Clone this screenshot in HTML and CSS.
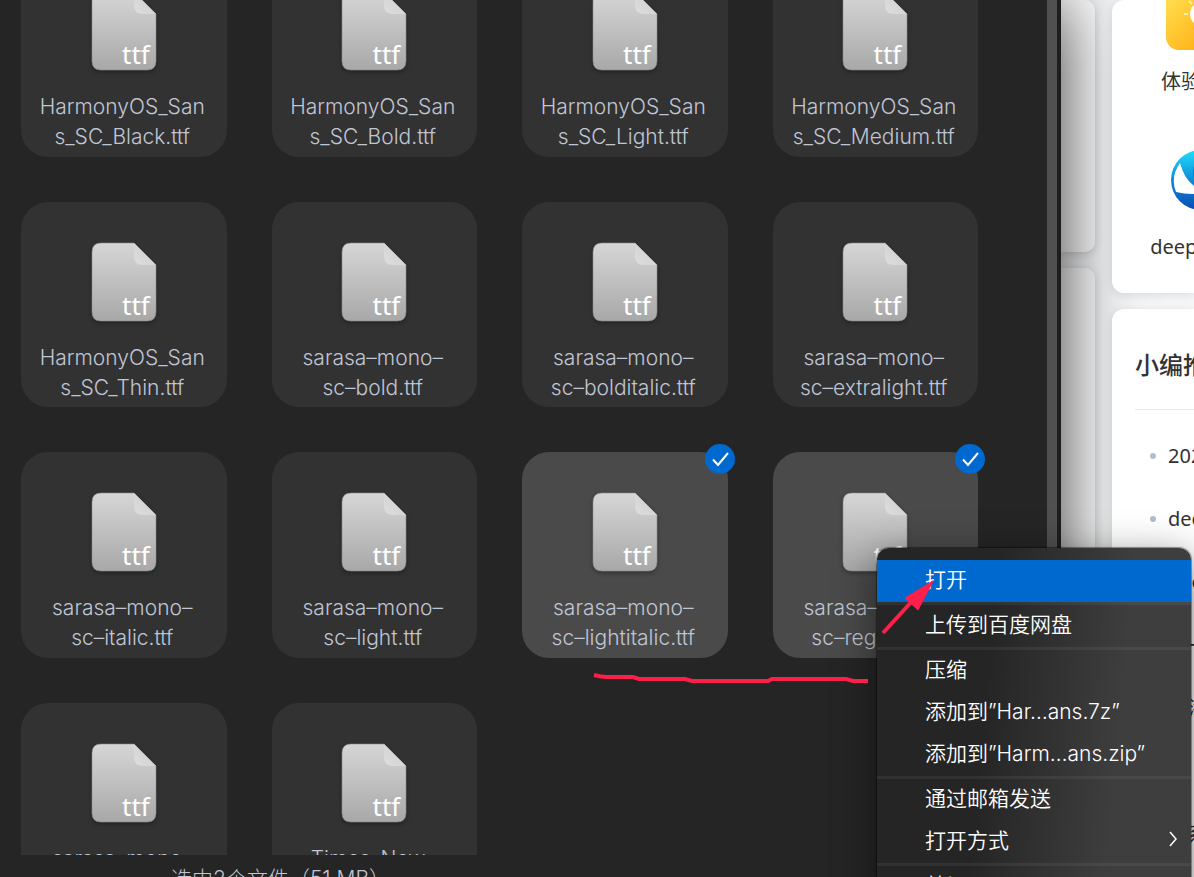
FILE: index.html
```
<!DOCTYPE html>
<html lang="zh-CN">
  <head>
    <meta charset="UTF-8" />
    <meta name="viewport" content="width=device-width, initial-scale=1.0" />
    <title>文件管理器</title>
    <link rel="stylesheet" href="styles.css">
  </head>
  <body>
    <!-- Shared icons -->
    <svg class="defs" width="0" height="0" aria-hidden="true">
      <defs>
        <linearGradient id="paper" x1="0" y1="0" x2="0" y2="1">
          <stop offset="0" stop-color="#d6d6d6" />
          <stop offset="1" stop-color="#a8a8a8" />
        </linearGradient>
        <linearGradient id="fold" x1="0" y1="1" x2="1" y2="0">
          <stop offset="0" stop-color="#dedede" />
          <stop offset="1" stop-color="#cccccc" />
        </linearGradient>
        <linearGradient id="deepin" x1="0" y1="0" x2="0" y2="1">
          <stop offset="0" stop-color="#22dcfa" />
          <stop offset="0.55" stop-color="#0a86d8" />
          <stop offset="1" stop-color="#0a4bb0" />
        </linearGradient>
        <symbol id="file" viewBox="0 0 66 80">
          <path d="M10 1H43L65 23V70Q65 79 56 79H10Q1 79 1 70V10Q1 1 10 1Z" fill="url(#paper)" stroke="#8f8f8f" stroke-width="0.6" />
          <path d="M43 1L65 23H52Q43 23 43 14Z" fill="url(#fold)" />
        </symbol>
        <symbol id="tick" viewBox="0 0 30 30">
          <circle cx="15" cy="15" r="15" fill="#0069cf" />
          <path d="M8 15.500L13 21L23 9" fill="none" stroke="#fff" stroke-width="2" />
        </symbol>
      </defs>
    </svg>

    <div class="desktop">
      <!-- File manager window -->
      <main class="window">
        <div class="scroller">
          <ul class="files" id="files"></ul>
        </div>
        <div class="status">选中2个文件（51 MB）</div>
      </main>

      <!-- Browser page behind the window -->
      <aside class="page">
        <div class="column">
          <div class="sheet"></div>
          <div class="sheet rest"></div>
        </div>
        <div class="column wide">
          <section class="panel apps">
            <a class="app" href="#">
              <span class="icon">
                <svg width="70" height="70" viewBox="0 0 70 70" aria-hidden="true">
                  <defs>
                    <linearGradient id="sunny" x1="0" y1="0" x2="1" y2="1">
                      <stop offset="0" stop-color="#ffe95a" />
                      <stop offset="0.7" stop-color="#ffb41c" />
                    </linearGradient>
                  </defs>
                  <rect width="70" height="70" rx="13" fill="url(#sunny)" />
                  <circle cx="36" cy="34" r="12" fill="#fff" />
                  <path d="M18 34H22M23 21L26 24" stroke="#fff" stroke-opacity="0.8" stroke-width="1.500" />
                </svg>
              </span>
              <span>体验中心</span>
            </a>
            <a class="app" href="#">
              <span class="icon">
                <svg width="60" height="60" viewBox="0 0 60 60" aria-hidden="true">
                  <circle cx="30" cy="30" r="30" fill="url(#deepin)" />
                  <path d="M9 13Q13 28 22 35Q28 40 36 42Q22 46 5 42Q-1 27 9 13Z" fill="#fff" />
                  <path d="M25 12Q18 24 26 33Q23 22 28 12Z" fill="#0a86d8" />
                </svg>
              </span>
              <span>deepinBBS</span>
            </a>
          </section>
          <section class="panel news">
            <h2>小编推荐</h2>
            <ul>
              <li><a href="#">2022</a></li>
              <li><a href="#">deepin</a></li>
              <li><a href="#">deepin</a></li>
              <li><a href="#">第一期</a></li>
              <li><a href="#">社添加</a></li>
              <li><a href="#">公</a></li>
              <li><a href="#">深系统</a></li>
            </ul>
          </section>
        </div>
      </aside>

      <!-- Context menu -->
      <div class="menu" role="menu">
        <button class="active" role="menuitem">打开</button>
        <hr />
        <button role="menuitem">上传到百度网盘</button>
        <hr />
        <button role="menuitem">压缩</button>
        <button role="menuitem">添加到”Har…ans.7z”</button>
        <button role="menuitem">添加到”Harm…ans.zip”</button>
        <hr />
        <button role="menuitem">通过邮箱发送</button>
        <button role="menuitem">打开方式
          <svg viewBox="0 0 8 16" aria-hidden="true"><path d="M1 1L7 8L1 15" fill="none" stroke="#fff" stroke-width="1.500" /></svg>
        </button>
        <hr />
        <button role="menuitem">剪切</button>
      </div>

      <!-- Red pen marks -->
      <svg class="underline" viewBox="0 0 276 12" aria-hidden="true">
        <path d="M1 4Q8 6 14 6H40L46 8H92L99 10H175L179 8H253L260 10H275" />
      </svg>
      <svg class="arrow" viewBox="0 0 54 56" aria-hidden="true">
        <path d="M3 54L34 20" />
        <polygon points="53,2 25,19 38,31" />
      </svg>
    </div>

    <script>
      // Each file name is split where the label wraps
      const files = [
        ["HarmonyOS_San", "s_SC_Black.ttf"],
        ["HarmonyOS_San", "s_SC_Bold.ttf"],
        ["HarmonyOS_San", "s_SC_Light.ttf"],
        ["HarmonyOS_San", "s_SC_Medium.ttf"],
        ["HarmonyOS_San", "s_SC_Thin.ttf"],
        ["sarasa–mono–", "sc–bold.ttf"],
        ["sarasa–mono–", "sc–bolditalic.ttf"],
        ["sarasa–mono–", "sc–extralight.ttf"],
        ["sarasa–mono–", "sc–italic.ttf"],
        ["sarasa–mono–", "sc–light.ttf"],
        ["sarasa–mono–", "sc–lightitalic.ttf", true],
        ["sarasa–mono–", "sc–regular.ttf", true],
        ["sarasa–mono–", "sc–semibold.ttf"],
        ["Times_New_", "Roman.ttf"],
      ];

      document.getElementById("files").innerHTML = files
        .map(
          ([first, second, selected]) => `
          <li class="file${selected ? " selected" : ""}">
            <div class="thumb">
              <svg viewBox="0 0 66 80"><use href="#file" /></svg>
              <span class="ext">ttf</span>
            </div>
            <div class="name">${first}<br />${second}</div>
            ${selected ? '<svg class="check" viewBox="0 0 30 30"><use href="#tick" /></svg>' : ""}
          </li>`
        )
        .join("");
    </script>
  </body>
</html>
```
FILE: styles.css
```
* {
  box-sizing: border-box;
}

body {
  margin: 0;
  font-family: Inter, "Noto Sans CJK SC", sans-serif;
  font-size: 21px;
  background: #f3f5f7;
}

ul {
  list-style: none;
  margin: 0;
  padding: 0;
}

a {
  color: inherit;
  text-decoration: none;
}

.defs {
  position: absolute;
}

.desktop {
  position: relative;
  display: flex;
  height: 100vh;
  overflow: hidden;
}

/* File manager */
.window {
  flex: 1;
  display: flex;
  flex-direction: column;
  background: #252525;
  border-right: 4px solid #1e1e1e;
  box-shadow: 0 0 70px rgba(0, 0, 0, 0.8);
  z-index: 1;
}

.scroller {
  flex: 1;
  min-height: 0;
  overflow: hidden;
  border-right: 10px solid #505050;
}

/* The list is scrolled, so the first row is cut at the top */
.files {
  display: grid;
  grid-template-columns: repeat(4, 1fr);
  gap: 45px;
  margin-top: -49px;
  padding: 0 69px 0 21px;
}

.file {
  position: relative;
  aspect-ratio: 1;
  padding-top: 40px;
  border-radius: 27px;
  background: #323232;
  text-align: center;
}

.file.selected {
  background: #4a4a4a;
}

.thumb {
  position: relative;
  width: 66px;
  height: 80px;
  margin: 0 auto;
}

.thumb svg {
  display: block;
  width: 66px;
  height: 80px;
  filter: drop-shadow(0 2px 2px rgba(0, 0, 0, 0.3));
}

.ext {
  position: absolute;
  right: 7px;
  bottom: 0;
  font-family: "Noto Sans", sans-serif;
  font-size: 26px;
  font-variant-ligatures: none;
  line-height: 34px;
  color: #fff;
}

.name {
  margin-top: 21px;
  padding-right: 3px;
  font-weight: 300;
  line-height: 30px;
  color: #c0c6d4;
}

.check {
  position: absolute;
  top: -8px;
  right: -7px;
  width: 30px;
  height: 30px;
}

.status {
  height: 22px;
  padding-left: 171px;
  border-right: 10px solid #505050;
  font-weight: 300;
  line-height: 48px;
  white-space: nowrap;
  color: #c0c6d4;
}

/* Browser page */
.page {
  display: flex;
  gap: 17px;
  width: 133px;
  font-family: "Noto Sans", "Noto Sans CJK SC", sans-serif;
  font-size: 20px;
  color: #333;
  white-space: nowrap;
}

.column {
  display: flex;
  flex-direction: column;
  flex: 0 0 34px;
  gap: 16px;
}

.column.wide {
  flex: 1;
  min-width: 0;
  z-index: 1;
}

.sheet {
  height: 252px;
  border-radius: 0 10px 10px 0;
  background: #fff;
  box-shadow: 0 2px 8px rgba(0, 0, 0, 0.15);
}

.sheet.rest {
  flex: 1;
}

.panel {
  overflow: hidden;
  border-radius: 12px 0 0 12px;
  background: #fff;
  box-shadow: 0 2px 8px rgba(0, 0, 0, 0.1);
}

.apps {
  height: 293px;
  padding-left: 40px;
}

.app {
  display: flex;
  flex-direction: column;
  align-items: center;
  gap: 17px;
  width: 98px;
  height: 165px;
  line-height: 30px;
}

.app:first-child {
  margin-top: -20px;
}

.icon {
  display: flex;
  align-items: center;
  height: 70px;
}

.news {
  flex: 1;
  min-height: 0;
  padding-left: 23px;
}

.news h2 {
  margin: 0 0 14px;
  padding: 36px 0 24px;
  border-bottom: 1px solid #e6e6e6;
  font-size: 24px;
  font-weight: 500;
  line-height: 40px;
}

.news li {
  display: flex;
  align-items: center;
  gap: 12px;
  height: 63px;
  padding-left: 15px;
}

.news li::before {
  content: "";
  flex: none;
  width: 6px;
  height: 6px;
  border-radius: 50%;
  background: #b4bdcc;
}

/* Context menu */
.menu {
  position: absolute;
  z-index: 2;
  top: 548px;
  right: 3px;
  width: 314px;
  padding-top: 12px;
  border-radius: 12px 12px 0 0;
  background: linear-gradient(95deg, #252525 35%, #3e3e3e 75%);
  box-shadow: 0 0 1px 1px rgba(0, 0, 0, 0.4), 0 10px 40px rgba(0, 0, 0, 0.5);
}

.menu button {
  display: flex;
  align-items: center;
  justify-content: space-between;
  width: 100%;
  height: 42px;
  padding: 0 14px 6px 48px;
  border: 0;
  background: none;
  color: #fff;
  font: inherit;
  font-weight: 350;
}

.menu button.active {
  background: #0069cf;
}

.menu hr {
  height: 3px;
  margin: 0;
  border: 0;
  background: rgba(255, 255, 255, 0.06);
}

.menu svg {
  width: 8px;
  height: 16px;
}

/* Pen marks */
.underline {
  position: absolute;
  z-index: 3;
  top: 671px;
  left: 593px;
  width: 276px;
  height: 12px;
  fill: none;
  stroke: #ff1f4b;
  stroke-width: 4;
}

.arrow {
  position: absolute;
  z-index: 3;
  top: 579px;
  left: 880px;
  width: 54px;
  height: 56px;
  fill: #ff1f4b;
  stroke: #ff1f4b;
}

.arrow path {
  stroke-width: 4;
}
```
